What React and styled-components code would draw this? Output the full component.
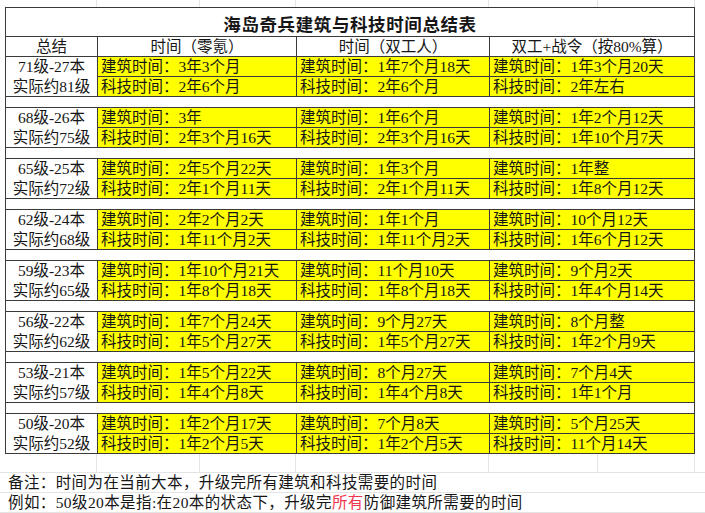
import React from 'react';
import styled, { createGlobalStyle } from 'styled-components';

const GlobalStyle = createGlobalStyle`
  * { box-sizing: border-box; }
  body {
    margin: 0;
    background: #ffffff;
    font-family: "Liberation Serif", "Noto Sans CJK SC", serif;
    color: #161616;
  }
`;

const COLS = '92px 199px 193px 205px';
const LINE = '#3a3a3a';
const FAINT = '#e4e4e4';

const blocks = [
  {
    level: '71级-27本', real: '实际约81级',
    build: ['3年3个月', '1年7个月18天', '1年3个月20天'],
    tech: ['2年6个月', '2年6个月', '2年左右'],
  },
  {
    level: '68级-26本', real: '实际约75级',
    build: ['3年', '1年6个月', '1年2个月12天'],
    tech: ['2年3个月16天', '2年3个月16天', '1年10个月7天'],
  },
  {
    level: '65级-25本', real: '实际约72级',
    build: ['2年5个月22天', '1年3个月', '1年整'],
    tech: ['2年1个月11天', '2年1个月11天', '1年8个月12天'],
  },
  {
    level: '62级-24本', real: '实际约68级',
    build: ['2年2个月2天', '1年1个月', '10个月12天'],
    tech: ['1年11个月2天', '1年11个月2天', '1年6个月12天'],
  },
  {
    level: '59级-23本', real: '实际约65级',
    build: ['1年10个月21天', '11个月10天', '9个月2天'],
    tech: ['1年8个月18天', '1年8个月18天', '1年4个月14天'],
  },
  {
    level: '56级-22本', real: '实际约62级',
    build: ['1年7个月24天', '9个月27天', '8个月整'],
    tech: ['1年5个月27天', '1年5个月27天', '1年2个月9天'],
  },
  {
    level: '53级-21本', real: '实际约57级',
    build: ['1年5个月22天', '8个月27天', '7个月4天'],
    tech: ['1年4个月8天', '1年4个月8天', '1年1个月'],
  },
  {
    level: '50级-20本', real: '实际约52级',
    build: ['1年2个月17天', '7个月8天', '5个月25天'],
    tech: ['1年2个月5天', '1年2个月5天', '11个月14天'],
  },
];

const Page = styled.div`
  width: 705px;
  height: 513px;
  overflow: hidden;
`;

const GridStrip = styled.div`
  display: flex;
  height: ${p => p.$h}px;
  padding-left: 5px;
  border-bottom: ${p => (p.$bottom ? `1px solid ${FAINT}` : 'none')};
`;

const GridCell = styled.div`
  width: ${p => p.$w}px;
  height: 100%;
  border-right: 1px solid ${FAINT};
`;

const Sheet = styled.div`
  margin-left: 5px;
  width: 690px;
  border-left: 1px solid ${LINE};
  border-top: 1px solid ${LINE};
`;

const TitleRow = styled.div`
  height: 29px;
  display: flex;
  align-items: center;
  justify-content: center;
  border-right: 1px solid ${LINE};
  border-bottom: 1px solid ${LINE};
  font-family: "Noto Sans CJK SC", sans-serif;
  font-weight: 700;
  font-size: 17.5px;
  letter-spacing: 0.6px;
  padding-top: 2px;
`;

const Row = styled.div`
  display: grid;
  grid-template-columns: ${COLS};
  grid-auto-rows: 20px;
`;

const Cell = styled.div`
  display: flex;
  align-items: center;
  justify-content: ${p => (p.$center ? 'center' : 'flex-start')};
  padding-left: ${p => (p.$center ? 0 : 3)}px;
  background: ${p => (p.$yellow ? '#ffff00' : '#ffffff')};
  border-right: 1px solid ${LINE};
  border-bottom: 1px solid ${LINE};
  font-size: 15.5px;
  line-height: 19px;
  white-space: nowrap;
  overflow: hidden;
`;

const MergedCell = styled.div`
  grid-row: span 2;
  display: flex;
  flex-direction: column;
  align-items: center;
  border-right: 1px solid ${LINE};
  border-bottom: 1px solid ${LINE};
  font-size: 15.5px;
  white-space: nowrap;
`;

const MergedLine = styled.div`
  height: 20px;
  line-height: 20px;
`;

const Gap = styled.div`
  height: 11px;
  border-right: 1px solid ${LINE};
  border-bottom: 1px solid ${LINE};
`;

const Note = styled.div`
  height: 20px;
  line-height: 20px;
  padding-left: 8px;
  font-size: 15.5px;
  letter-spacing: 0.4px;
  white-space: nowrap;
  border-bottom: 1px solid ${FAINT};
`;

const Red = styled.span`
  color: #f0364e;
`;

const stripCols = [92, 103, 96, 193, 109, 97];

function Strip({ h, bottom }) {
  return (
    <GridStrip $h={h} $bottom={bottom}>
      {stripCols.map((w, i) => (
        <GridCell key={i} $w={w} />
      ))}
    </GridStrip>
  );
}

function Block({ data }) {
  return (
    <Row>
      <MergedCell>
        <MergedLine>{data.level}</MergedLine>
        <MergedLine>{data.real}</MergedLine>
      </MergedCell>
      {data.build.map((t, i) => (
        <Cell key={'b' + i} $yellow>建筑时间：{t}</Cell>
      ))}
      {data.tech.map((t, i) => (
        <Cell key={'t' + i} $yellow>科技时间：{t}</Cell>
      ))}
    </Row>
  );
}

export default function App() {
  return (
    <Page>
      <GlobalStyle />
      <Strip h={7} />
      <Sheet>
        <TitleRow>海岛奇兵建筑与科技时间总结表</TitleRow>
        <Row>
          <Cell $center>总结</Cell>
          <Cell $center>时间（零氪）</Cell>
          <Cell $center>时间（双工人）</Cell>
          <Cell $center>双工+战令（按80%算）</Cell>
        </Row>
        {blocks.map((b, i) => (
          <React.Fragment key={b.level}>
            <Block data={b} />
            {i < blocks.length - 1 && <Gap />}
          </React.Fragment>
        ))}
      </Sheet>
      <Strip h={19} bottom />
      <Note>备注：时间为在当前大本，升级完所有建筑和科技需要的时间</Note>
      <Note>
        例如：50级20本是指:在20本的状态下，升级完<Red>所有</Red>防御建筑所需要的时间
      </Note>
    </Page>
  );
}
